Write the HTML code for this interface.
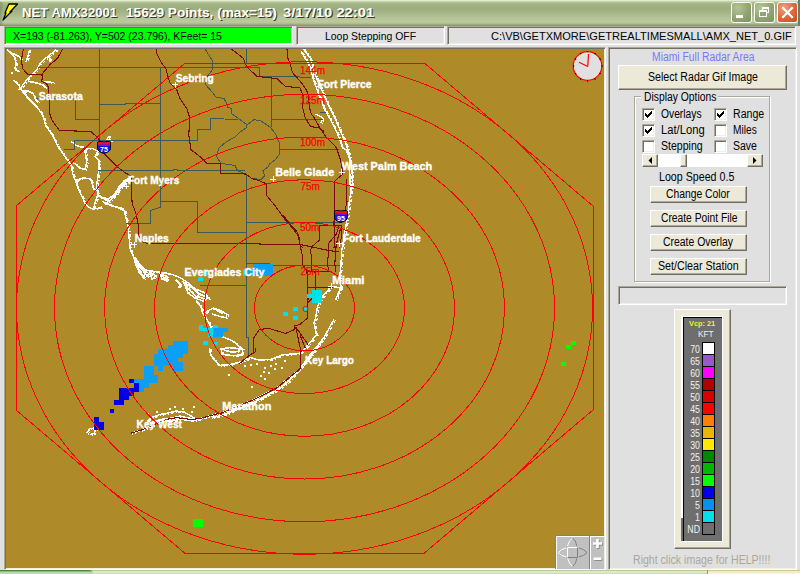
<!DOCTYPE html>
<html><head><meta charset="utf-8">
<style>
*{margin:0;padding:0;box-sizing:border-box}
html,body{width:800px;height:574px;overflow:hidden;background:#e0e0e0;font-family:"Liberation Sans",sans-serif;position:relative}
.abs{position:absolute}
#title{left:0;top:0;width:800px;height:26px;background:linear-gradient(to bottom,#e6eecf 0px,#dfe8c6 1px,#b4c396 2px,#a3b487 4px,#9cad7c 8px,#a6b689 13px,#b6c598 18px,#bcca9c 22px,#aab78c 24px,#8f9b73 25px,#8f9b73 26px)}
.tt{position:absolute;top:5px;font-weight:bold;font-size:13px;line-height:16px;color:#fff;text-shadow:1px 1px 0 #3a3a20;white-space:pre;transform-origin:0 0}
.tb{top:2px;width:21px;height:21px;border:1px solid #fff;border-radius:3px;background:radial-gradient(circle at 30% 25%,#b5c49a 0,#93a472 55%,#7f9160 100%)}
.s2{position:absolute;box-shadow:inset 1px 1px 0 #716f64, inset -1px -1px 0 #f1efe2;border-top:1px solid #aca899;border-left:1px solid #aca899;border-right:1px solid #fff;border-bottom:1px solid #fff}
.raised{position:absolute;background:#ece9d8;border-top:1px solid #fff;border-left:1px solid #fff;border-right:1px solid #716f64;border-bottom:1px solid #716f64;box-shadow:inset -1px -1px 0 #aca899}
.t{position:absolute;font-size:11px;line-height:11px;color:#000;white-space:pre;transform-origin:0 0}
.p{position:absolute;font-size:12px;line-height:12px;color:#000;white-space:pre;transform-origin:0 0}
.cb{position:absolute;width:13px;height:13px;background:#fff;border-top:1px solid #aca899;border-left:1px solid #aca899;border-right:1px solid #fff;border-bottom:1px solid #fff;box-shadow:inset 1px 1px 0 #716f64, inset -1px -1px 0 #f1efe2}
.lg{position:absolute;font-size:10px;line-height:10px;color:#f0f0f0;white-space:pre;text-align:right;width:30px;transform-origin:100% 0;transform:scaleX(0.88)}
.sw{position:absolute;left:702px;width:13px;height:13px;border:1px solid #000}
</style></head><body>
<div id="title" class="abs">
  <svg class="abs" style="left:0;top:0" width="22" height="24" viewBox="0 0 22 24">
    <polygon points="9,4 17.5,4 10,12 12,11 3,20 6,13 5,13 8,6" fill="#ffff00" stroke="#000" stroke-width="1.3" stroke-linejoin="round"/>
  </svg>
  <div class="tt" style="left:21.5px;transform:scaleX(1.01)">NET AMX32001</div>
  <div class="tt" style="left:125.5px;transform:scaleX(1.051)">15629 Points, (max=15)</div>
  <div class="tt" style="left:283px;transform:scaleX(1.136)">3/17/10 22:01</div>
  <div class="tb abs" style="left:731px"><div class="abs" style="left:4px;top:12px;width:7px;height:3px;background:#fff"></div></div>
  <div class="tb abs" style="left:754px">
    <div class="abs" style="left:7px;top:4px;width:7px;height:6px;border:1px solid #fff;border-top-width:2px"></div>
    <div class="abs" style="left:4px;top:7px;width:8px;height:7px;border:1px solid #fff;border-top-width:2px;background:#93a472"></div>
  </div>
  <div class="tb abs" style="left:777px;background:radial-gradient(circle at 30% 25%,#f0a080 0,#de6a40 50%,#c94a20 100%)">
    <svg class="abs" style="left:0;top:0" width="19" height="19"><path d="M5,5 L14,14 M14,5 L5,14" stroke="#fff" stroke-width="2.2" stroke-linecap="square"/></svg>
  </div>
  <div class="abs" style="left:798px;top:0;width:2px;height:26px;background:#6f7d58"></div>
  <div class="abs" style="left:0;top:2px;width:4px;height:24px;background:linear-gradient(to right,rgba(110,130,90,0.55),rgba(110,130,90,0))"></div>
</div>

<!-- status row -->
<div class="s2" style="left:4px;top:26px;width:289px;height:19px;background:#00ff00"></div>
<div class="t" style="left:13px;top:30.7px;transform:scaleX(0.954)">X=193 (-81.263), Y=502 (23.796), KFeet= 15</div>
<div class="s2" style="left:296px;top:26px;width:149px;height:19px;background:#e0e0e0"></div>
<div class="t" style="left:324.5px;top:30.7px;transform:scaleX(0.948)">Loop Stepping OFF</div>
<div class="s2" style="left:447px;top:26px;width:349px;height:19px;background:#e0e0e0"></div>
<div class="t" style="left:491px;top:30.7px;transform:scaleX(1.005)">C:\VB\GETXMORE\GETREALTIMESMALL\AMX_NET_0.GIF</div>

<!-- map -->
<div class="s2" style="left:4px;top:47px;width:602px;height:523px;background:#ae8b28;overflow:hidden">
<svg class="abs" style="left:-5px;top:-48px" width="800" height="600" viewBox="0 0 800 600">
<g fill="none" stroke="#ffffff" stroke-width="1.5" stroke-linejoin="round" shape-rendering="crispEdges"><path d="M7,49.7 L11.3,53.3 L15,58.2 L16.2,64.3 L15,68 L16.2,70.4 L18.6,70.4"/><path d="M12.5,53.3 L19.9,57 L21,59.4"/><path d="M29.6,49.7 L27.8,57 L26,61.9"/><path d="M56.4,49.7 L50.3,54.5 L44.2,59.4 L40.6,63 L37,69.2 L33.3,72.8 L28.4,77.7 L24.7,82.6 L21,87.5 L18.6,89.9"/><path d="M49,57 L50.3,61.9"/><path d="M13.8,80.1 L18.6,85 L22.3,91.1 L27.2,97.2 L32,102 L37,107 L40.6,111.9 L43,116 L46,126 L52.5,135 L59,148.9 L61.6,151.3 L67.1,159.7 L71.3,165.3 L72.7,173.6 L75.5,180.6 L78.3,189 L82.5,197.3 L85.3,204.3 L90.8,208.5 L97.8,208.5 L102,207"/><path d="M22.3,91.1 L28.4,91.1 L33.3,93.6 L35.7,99.7 L38.1,102.1"/><path d="M28.4,81.4 L35.7,82.6 L43,85 L45.5,87.5"/><path d="M44.2,81.4 L54,82.6"/><path d="M71.3,141.6 L76.9,145.8 L83.9,147.1 L85.3,152.7 L86.7,161.1 L85.3,169.4 L79.7,168 L75.5,163.9 L72.7,162.5"/><path d="M83.9,148.5 L92.2,148.5 L97.8,151.3 L95,156.9 L99.2,161.1 L99.2,168 L97.8,177.8 L96.4,186.2 L97.8,194.5 L95,202.9 L93.6,208.5"/><path d="M75.5,180.6 L83.9,177.8 L90.8,179.2 L93.6,189 L97.8,190.4"/><path d="M97.8,194.5 L106.2,200.1 L113.1,196 L118.7,187.6 L124.3,180.6 L131.3,177.8"/><path d="M102,201.5 L109,204.3 L116,207 L122.9,208.5 L125.7,214"/><path d="M106,141 L108.75,136.5 L110.5,141"/><path d="M128.7,180.2 L119,186.3 L116.6,193.3 L108.7,198.5 L100,197.6"/><path d="M124.4,182.8 L117.4,191.6 L110.5,200.3 L105.2,203.7 L117.4,207.2 L124.4,210.7 L126,217.7 L128,226.4 L128.7,233.4 L129.6,242 L130,248 L132.5,255 L138.75,263.75 L145,270 L152.5,271.25 L161.25,272.5 L170,273.75 L180,277.5 L187.5,282.5 L195,288.75 L203.4,292.2 L207,295.9 L208.3,298.3 L204,299 L197.3,295.9"/><path d="M136,262 L140,272 L144,279"/><path d="M141,268 L147,276 L150,273"/><path d="M161,273 L165,279 L167,276"/><path d="M183,281 L188,289 L192,286"/><path d="M190,290 L196,297 L200,294"/><path d="M196,300.7 L201,306.8 L202.2,311.7 L204.6,316.6 L208.3,321.5 L210.7,326.3 L213.2,331.2 L220.5,336.1 L230.2,339.75 L236.3,343.4 L241.2,348.3"/><path d="M204.6,313 L213.2,308 L220.5,310.5 L226.6,314.1 L226.6,317.8 L220.5,316.6 L212,314.1"/><path d="M209.6,348 L210.5,355 L219.2,365.4 L229.6,364.6 L240,362 L250.5,357.6 L259.2,360.2 L271.4,359.3 L281.9,355 L300,353.2 L305.2,348 L310.5,342 L316.5,335 L314,323 L315.7,317.7 L317.4,307.2 L320.9,298.5 L326,292.4 L331.4,286.3 L341,288 L337.5,295 L335.7,300.3"/><path d="M221,349 L230,347.5 L242.7,349 L242,355 L232,355.5 L222,354 Z"/><path d="M334,319.4 L324.4,336.8 L319.2,343.8 L315.7,348 L310,355 L300,368.9 L287,379.4 L276.7,388 L266.2,393.3 L252.3,400.3 L234.8,407.2 L221,413.3 L215.7,414.2 L200,418.6 L190.6,419.4 L176.7,417.7 L166.2,419.4 L154,424.7 L141.8,429.9 L130.5,433.4"/><path d="M86.5,433.5 L90,428.5 L96,428 L94,433.5 L90,434.5"/><path d="M303.5,48.9 L310.5,58.5 L315.7,75.9 L322.6,91.6 L328.7,105.5 L334.8,117.7 L340,130 L345.3,142 L348.8,153.2 L351.4,165.4 L352.3,174.1 L352.3,186.3 L349.7,198.5 L348,212.5 L346.2,224.7 L343.6,238.6 L342.7,248 L341.8,248.9 L341,265.4 L340,274 L341,288"/><path d="M300.9,51.5 L308.7,63.7 L314,81 L319,95 L324.4,109 L331.4,121.2 L337.5,133.4 L342.7,148 L346,149.7 L349.7,158.5 L349.7,172.4 L350.5,191.6"/><path d="M315.7,114 L322.6,117.7 L321,123"/><path d="M147,421 L153,417 L160,414.5 L168,413 L176,411 L184,412 L191,416 L196,419 L188,418 L180,416 L172,418 L163,419 L155,421"/><path d="M150,423 L160,420 L172,421 L182,419 L192,421 L200,419"/><path d="M324,337 L316,349 L306,361 L297,372 L289,381 L279,389 L268,395 L255,402 L240,408 L226,414 L212,418"/><path d="M134,258 L140,266 L146,272 L144,277 L139,272 L136,265 Z"/><path d="M150,272 L156,276 L152,279 Z"/><path d="M160,274 L166,276 L167,281 L162,279 Z"/><path d="M184,283 L192,287 L198,293 L206,297 L203,301 L195,298 L188,293 Z"/><path d="M176,280 L181,285 L178,287"/><path d="M224,350 L232,352 L240,351"/><path d="M216,310 L222,313"/></g>
<g fill="none" stroke="#ffffff" stroke-width="1.2" stroke-dasharray="3 2 1 2" transform="translate(1.5,0.8)" shape-rendering="crispEdges"><path d="M7,49.7 L11.3,53.3 L15,58.2 L16.2,64.3 L15,68 L16.2,70.4 L18.6,70.4"/><path d="M12.5,53.3 L19.9,57 L21,59.4"/><path d="M29.6,49.7 L27.8,57 L26,61.9"/><path d="M56.4,49.7 L50.3,54.5 L44.2,59.4 L40.6,63 L37,69.2 L33.3,72.8 L28.4,77.7 L24.7,82.6 L21,87.5 L18.6,89.9"/><path d="M49,57 L50.3,61.9"/><path d="M13.8,80.1 L18.6,85 L22.3,91.1 L27.2,97.2 L32,102 L37,107 L40.6,111.9 L43,116 L46,126 L52.5,135 L59,148.9 L61.6,151.3 L67.1,159.7 L71.3,165.3 L72.7,173.6 L75.5,180.6 L78.3,189 L82.5,197.3 L85.3,204.3 L90.8,208.5 L97.8,208.5 L102,207"/><path d="M22.3,91.1 L28.4,91.1 L33.3,93.6 L35.7,99.7 L38.1,102.1"/><path d="M28.4,81.4 L35.7,82.6 L43,85 L45.5,87.5"/><path d="M44.2,81.4 L54,82.6"/><path d="M71.3,141.6 L76.9,145.8 L83.9,147.1 L85.3,152.7 L86.7,161.1 L85.3,169.4 L79.7,168 L75.5,163.9 L72.7,162.5"/><path d="M83.9,148.5 L92.2,148.5 L97.8,151.3 L95,156.9 L99.2,161.1 L99.2,168 L97.8,177.8 L96.4,186.2 L97.8,194.5 L95,202.9 L93.6,208.5"/><path d="M75.5,180.6 L83.9,177.8 L90.8,179.2 L93.6,189 L97.8,190.4"/><path d="M97.8,194.5 L106.2,200.1 L113.1,196 L118.7,187.6 L124.3,180.6 L131.3,177.8"/><path d="M102,201.5 L109,204.3 L116,207 L122.9,208.5 L125.7,214"/><path d="M106,141 L108.75,136.5 L110.5,141"/><path d="M128.7,180.2 L119,186.3 L116.6,193.3 L108.7,198.5 L100,197.6"/><path d="M124.4,182.8 L117.4,191.6 L110.5,200.3 L105.2,203.7 L117.4,207.2 L124.4,210.7 L126,217.7 L128,226.4 L128.7,233.4 L129.6,242 L130,248 L132.5,255 L138.75,263.75 L145,270 L152.5,271.25 L161.25,272.5 L170,273.75 L180,277.5 L187.5,282.5 L195,288.75 L203.4,292.2 L207,295.9 L208.3,298.3 L204,299 L197.3,295.9"/><path d="M136,262 L140,272 L144,279"/><path d="M141,268 L147,276 L150,273"/><path d="M161,273 L165,279 L167,276"/><path d="M183,281 L188,289 L192,286"/><path d="M190,290 L196,297 L200,294"/><path d="M196,300.7 L201,306.8 L202.2,311.7 L204.6,316.6 L208.3,321.5 L210.7,326.3 L213.2,331.2 L220.5,336.1 L230.2,339.75 L236.3,343.4 L241.2,348.3"/><path d="M204.6,313 L213.2,308 L220.5,310.5 L226.6,314.1 L226.6,317.8 L220.5,316.6 L212,314.1"/><path d="M209.6,348 L210.5,355 L219.2,365.4 L229.6,364.6 L240,362 L250.5,357.6 L259.2,360.2 L271.4,359.3 L281.9,355 L300,353.2 L305.2,348 L310.5,342 L316.5,335 L314,323 L315.7,317.7 L317.4,307.2 L320.9,298.5 L326,292.4 L331.4,286.3 L341,288 L337.5,295 L335.7,300.3"/><path d="M221,349 L230,347.5 L242.7,349 L242,355 L232,355.5 L222,354 Z"/><path d="M334,319.4 L324.4,336.8 L319.2,343.8 L315.7,348 L310,355 L300,368.9 L287,379.4 L276.7,388 L266.2,393.3 L252.3,400.3 L234.8,407.2 L221,413.3 L215.7,414.2 L200,418.6 L190.6,419.4 L176.7,417.7 L166.2,419.4 L154,424.7 L141.8,429.9 L130.5,433.4"/><path d="M86.5,433.5 L90,428.5 L96,428 L94,433.5 L90,434.5"/><path d="M303.5,48.9 L310.5,58.5 L315.7,75.9 L322.6,91.6 L328.7,105.5 L334.8,117.7 L340,130 L345.3,142 L348.8,153.2 L351.4,165.4 L352.3,174.1 L352.3,186.3 L349.7,198.5 L348,212.5 L346.2,224.7 L343.6,238.6 L342.7,248 L341.8,248.9 L341,265.4 L340,274 L341,288"/><path d="M300.9,51.5 L308.7,63.7 L314,81 L319,95 L324.4,109 L331.4,121.2 L337.5,133.4 L342.7,148 L346,149.7 L349.7,158.5 L349.7,172.4 L350.5,191.6"/><path d="M315.7,114 L322.6,117.7 L321,123"/><path d="M147,421 L153,417 L160,414.5 L168,413 L176,411 L184,412 L191,416 L196,419 L188,418 L180,416 L172,418 L163,419 L155,421"/><path d="M150,423 L160,420 L172,421 L182,419 L192,421 L200,419"/><path d="M324,337 L316,349 L306,361 L297,372 L289,381 L279,389 L268,395 L255,402 L240,408 L226,414 L212,418"/><path d="M134,258 L140,266 L146,272 L144,277 L139,272 L136,265 Z"/><path d="M150,272 L156,276 L152,279 Z"/><path d="M160,274 L166,276 L167,281 L162,279 Z"/><path d="M184,283 L192,287 L198,293 L206,297 L203,301 L195,298 L188,293 Z"/><path d="M176,280 L181,285 L178,287"/><path d="M224,350 L232,352 L240,351"/><path d="M216,310 L222,313"/></g>
<g fill="#ffffff" shape-rendering="crispEdges"><rect x="227.7" y="374" width="2" height="2"/><rect x="251.25" y="386.1" width="2" height="2"/><rect x="244" y="365" width="2" height="2"/><rect x="250.4" y="364.2" width="2" height="2"/><rect x="256" y="363.4" width="2" height="2"/><rect x="264.25" y="367.4" width="2" height="2"/><rect x="263.4" y="370.7" width="2" height="2"/><rect x="268.3" y="372.3" width="2" height="2"/><rect x="260.2" y="374.75" width="2" height="2"/><rect x="264.25" y="378" width="2" height="2"/><rect x="269.9" y="365" width="2" height="2"/><rect x="274" y="368.25" width="2" height="2"/><rect x="281.3" y="366.6" width="2" height="2"/><rect x="274.8" y="363.4" width="2" height="2"/><rect x="283.75" y="360.1" width="2" height="2"/><rect x="262.6" y="358.5" width="2" height="2"/><rect x="11" y="72" width="2" height="2"/><rect x="156" y="411" width="2" height="2"/><rect x="169" y="408" width="2" height="2"/><rect x="174" y="406" width="2" height="2"/><rect x="193" y="406" width="2" height="2"/><rect x="191" y="411" width="2" height="2"/><rect x="147" y="413" width="2" height="2"/><rect x="182" y="408" width="2" height="2"/></g>
<g fill="none" stroke="#3b5a5c" stroke-width="1" shape-rendering="crispEdges"><path d="M38,67.5 H259.5 V76.5 L300,77 L311,77.5"/><path d="M99.5,49 V141"/><path d="M36,98.5 H75.5 V119.5 H99.5"/><path d="M99.5,104.5 H125.5 V103.5 H160.5"/><path d="M160.5,67 V207 L150.5,210.5 V223.5 H126"/><path d="M64,149.5 H74.5 V140.5 H197.5 V129.5 H210.5 V118.5 L238,119.5"/><path d="M205,49 L212,60 L213,69 L205,79 L206,85 L212,92 L216,97 L224,98.5 L227,104 L228,107.5 L231.5,108.5 L232,114 L238,118 L247,125 L246,128 L240,132 L235,137 L226,142 L219,148 L216.5,156.5 L221,163.5 L235,165.5 L237.5,170.5 L245,174 L252,178.5 L261,179.5 L264.5,176 L263,170.5 L268,167 L270,163.5 L275,160 L279,155 L280,149 L279,142 L275,133 L270,127 L261,121 L254,119.5 L247,125"/><path d="M246.5,49 V64"/><path d="M271.5,77 V127"/><path d="M271.5,119.5 H322.5"/><path d="M320,112.5 H326"/><path d="M280,149.5 H339"/><path d="M97.5,170.5 H173.5 V169 H177.5 V170.5 H245"/><path d="M246.5,174 V337 H248.5 V357"/><path d="M246,222.5 H340"/><path d="M161,201.5 H197.5 V232.5 H246"/><path d="M200,285.5 H246.5"/><path d="M246.5,263.5 H269.5 L271.5,265.5 H340"/></g>
<g fill="none" stroke="#7c0808" stroke-width="1.1" shape-rendering="crispEdges"><path d="M23.5,49 L22.3,53.3 L21.7,60.6 L22.3,68 L26,72.8 L28.4,74.7 L40.6,74.7 L42.4,75.3 L41.8,81.4 L46.7,83.8 L48.5,87.5 L49.1,97.2 L50,114.75 L52,120 L59.25,130.5 L90.75,131.5 L97.5,137.25 L100,141"/><path d="M62.5,49 L57.7,58.2 L50.3,64.3 L43,72.8 L42.4,75.3"/><path d="M104.5,154 L111.7,161.1 L117.3,166.7 L124.3,172.2 L131.3,176.4 L131.3,191.7 L132.2,203.7 L135.7,212.5 L138.3,224.7 L139.2,240.3 L147,243.5 H254 L266,244.5 H300 L302.6,248"/><path d="M156,49 L156.5,53 L161,62 L166,69 L169.7,82.8 L176.7,89.8 L180,98.5 L187,109 L189.7,117.7 L188.8,135 L190.9,149.6 L201,157.5 L207,163.5 L220,163.5 L221,173.3 L245.3,174 L252,178.5 L260,181 L266,183.7 L267,196 L275,205.5 L283.6,217.7 L294,229.9 L300,238.6"/><path d="M231.4,49 L243.6,58.5 L245.3,63.7 L248.8,69 L256.6,76 L264.5,77.3 L276.7,78.5 L285.4,86.3 L300,88 L303.5,96.8 L302.6,107.2 L305.2,117.7 L310.5,126.4 L319,128 L324.4,131.6"/><path d="M287,49 L288,58.5 L290.6,65.4 L292.3,72.4 L300,81 L305.2,88 L307.8,93.3 L308.7,100.3 L310.5,112.5 L314,117.7 L319,126.4 L326,136.9 L333,143.8 L336.6,148 L340,158.5 L341.8,165.4 L342.7,174.1 L334.8,181 L334,224.7 L334.8,235 L334,248"/><path d="M346.2,179.4 L347,202 L344.4,212.5"/><path d="M341,224.7 L341.8,235 L339.2,248"/><path d="M307,270.5 L307.8,317.7 L301.7,323 L300,324.7 L295,325.5 L294,329.9 L285.4,333.4 L276.7,330.8 L268,328 L259.2,329.9 L253.1,338.6 V351.5"/><path d="M317.4,293.3 L312.2,298.5 L307,303.7"/><path d="M300,335 L305.2,348"/><path d="M255.7,348 V351.5 L248.8,355.8 L239.2,363.7"/><path d="M300,368.9 L287,379.4 L276.7,388 L266.2,393.3 L252.3,400.3 L234.8,407.2 L221,413.3 L215.7,414.2 L200,418.6 L190.6,419.4 L176.7,417.7 L166.2,419.4 L154,424.7 L141.8,429.9 L130.5,433.4"/><path d="M295.7,327 L308,344.5"/><path d="M295.7,327 L301,351.4 L300,368.9"/><path d="M283,215 L288.9,222.4 L297.8,232.8 L300,244.6 L302.2,255 L303,265.3 L307.4,271.2 L308.1,300"/><path d="M280,244.6 H300.7 L328.8,250.5 L339.2,252"/><path d="M320,225.4 L319.2,240.2 L311.8,246.8 L310.3,250.5 L311.8,258 V271.2 L315.5,272.7 V286 L314,300"/><path d="M320,225.4 H339.2"/><path d="M334.8,215 V225.4"/><path d="M339.2,225.4 L336.2,234.2 L328.8,243.1 V250.5 L327.4,263.8 L328.8,271.2 H308"/><path d="M340.7,228.3 L338.5,235.7 L336.2,244.6 L334.8,263.8 L336,272"/><path d="M308,287.5 H333.3"/></g>
<g transform="translate(97,141)"><path d="M0.5,1 L3,0.5 L7,1 L11,0.5 L13.5,1 V7.5 Q13.5,10.5 7,12.5 Q0.5,10.5 0.5,7.5 Z" fill="#1414f0" stroke="#000" stroke-width="1"/><path d="M1,1.2 L3,1 L7,1.5 L11,1 L13,1.2 V3.6 H1 Z" fill="#ff1010"/><rect x="1" y="3.6" width="12" height="1" fill="#a020c0"/><text x="7" y="10.6" text-anchor="middle" font-family="Liberation Sans" font-weight="bold" font-size="7" fill="#fff">75</text></g><g transform="translate(334,210)"><path d="M0.5,1 L3,0.5 L7,1 L11,0.5 L13.5,1 V7.5 Q13.5,10.5 7,12.5 Q0.5,10.5 0.5,7.5 Z" fill="#1414f0" stroke="#000" stroke-width="1"/><path d="M1,1.2 L3,1 L7,1.5 L11,1 L13,1.2 V3.6 H1 Z" fill="#ff1010"/><rect x="1" y="3.6" width="12" height="1" fill="#a020c0"/><text x="7" y="10.6" text-anchor="middle" font-family="Liberation Sans" font-weight="bold" font-size="7" fill="#fff">95</text></g>
<g shape-rendering="crispEdges"><rect x="253" y="263.75" width="20" height="12.5" fill="#0ca0f4"/><rect x="247.5" y="268.75" width="5.5" height="7.5" fill="#0ca0f4"/><rect x="242.5" y="268.75" width="5" height="7.5" fill="#00e0e8"/><rect x="203" y="269" width="5" height="7.3" fill="#00e0e8"/><rect x="198" y="277" width="5" height="3.6" fill="#00e0e8"/><rect x="198.5" y="324.5" width="4.3" height="6.7" fill="#00e0e8"/><rect x="202.8" y="328.2" width="3.7" height="3" fill="#00e0e8"/><rect x="213.2" y="324.5" width="4.8" height="3.7" fill="#00e0e8"/><rect x="213.2" y="328.2" width="14.6" height="3.6" fill="#0ca0f4"/><rect x="213.2" y="331.8" width="9.8" height="4.9" fill="#0ca0f4"/><rect x="207.7" y="328.2" width="4.9" height="8.5" fill="#00e0e8"/><rect x="202.8" y="341" width="4.9" height="3.6" fill="#00e0e8"/><rect x="213.2" y="341.6" width="4.8" height="3" fill="#00e0e8"/><rect x="283" y="311.5" width="5" height="4" fill="#00e0e8"/><rect x="293" y="307" width="5" height="4" fill="#00e0e8"/><rect x="293" y="316" width="5" height="4" fill="#00e0e8"/><rect x="312" y="290" width="10" height="13" fill="#00e0e8"/><rect x="307" y="294" width="5" height="3.5" fill="#00e0e8"/><rect x="173" y="341" width="15" height="7" fill="#0ca0f4"/><rect x="168" y="344.7" width="5" height="3.3" fill="#0ca0f4"/><rect x="193" y="519" width="10" height="8" fill="#00ff00"/><rect x="571" y="341" width="5" height="4" fill="#00ff00"/><rect x="566" y="345" width="5" height="4" fill="#00ff00"/><rect x="561" y="362" width="5" height="4" fill="#00ff00"/><rect x="129" y="379" width="5" height="3.6" fill="#0000e8"/><rect x="134" y="382.8" width="5.3" height="9.5" fill="#0000e8"/><rect x="118.8" y="388" width="15.3" height="8" fill="#0000e8"/><rect x="118.8" y="396" width="10.2" height="4.4" fill="#0000e8"/><rect x="114" y="400.4" width="9.8" height="4.4" fill="#0000e8"/><rect x="110" y="409" width="4" height="3.8" fill="#0000e8"/><rect x="94" y="417" width="4.6" height="5" fill="#0000e8"/><rect x="94" y="422" width="9.8" height="8" fill="#0000e8"/><rect x="100" y="422" width="3.8" height="8" fill="#0000e8"/><polygon points="172.9,341.1 187.6,341.1 187.6,353.6 183.2,353.6 183.2,358 178,358 178,362.3 183.2,362.3 183.2,371.1 172.9,371.1 172.9,366 162.7,366 162.7,371.1 158.3,371.1 158.3,366 153.9,366 153.9,353.6 158.3,353.6 158.3,349.2 167.8,349.2 167.8,344.8 172.9,344.8" fill="#0ca0f4"/><polygon points="144.4,366 153.9,366 153.9,374.8 158.3,374.8 158.3,382.8 148.8,382.8 148.8,388 143.7,388 143.7,392.3 139.3,392.3 139.3,382.8 134.1,382.8 134.1,379.2 144.4,379.2" fill="#0ca0f4"/></g>
<g fill="none" stroke="#ff0000" stroke-width="1" shape-rendering="crispEdges"><ellipse cx="304.5" cy="308" rx="50" ry="42.75"/><ellipse cx="304.5" cy="308" rx="100" ry="85.50"/><ellipse cx="304.5" cy="308" rx="150" ry="128.25"/><ellipse cx="304.5" cy="308" rx="200" ry="171.00"/><ellipse cx="304.5" cy="308" rx="250" ry="213.75"/><ellipse cx="304.5" cy="308" rx="288" ry="246.24"/><polygon points="185.2,63 424.3,63 593,206 593,410 423.8,553.5 185.2,553.5 16,410 16,206"/></g>
<g fill="#ff0000" stroke="#ff0000" stroke-width="0.25" font-family="Liberation Sans" font-size="10"><text x="300" y="73.8">144m</text><text x="300" y="103.5">125m</text><text x="300" y="146">100m</text><text x="300.4" y="189.6">75m</text><text x="300" y="231.4">50m</text><text x="300.4" y="274.5">25m</text></g>
<g fill="#ffffff" stroke="#ffffff" stroke-width="0.35" font-family="Liberation Sans" font-weight="bold" font-size="10.5"><text x="38.7" y="100.2" textLength="44" lengthAdjust="spacingAndGlyphs">Sarasota</text><text x="175.8" y="81.5" textLength="38" lengthAdjust="spacingAndGlyphs">Sebring</text><text x="317.4" y="88.2" textLength="54" lengthAdjust="spacingAndGlyphs">Fort Pierce</text><text x="127.9" y="184.2" textLength="51.4" lengthAdjust="spacingAndGlyphs">Fort Myers</text><text x="275.2" y="176.3" textLength="59" lengthAdjust="spacingAndGlyphs">Belle Glade</text><text x="341.8" y="170.3" textLength="90.4" lengthAdjust="spacingAndGlyphs">West Palm Beach</text><text x="134.8" y="242.1" textLength="34" lengthAdjust="spacingAndGlyphs">Naples</text><text x="342.7" y="241.7" textLength="78.2" lengthAdjust="spacingAndGlyphs">Fort Lauderdale</text><text x="184.5" y="275.5" textLength="80" lengthAdjust="spacingAndGlyphs">Everglades City</text><text x="332.2" y="284.2" textLength="32.3" lengthAdjust="spacingAndGlyphs">Miami</text><text x="305" y="363.8" textLength="49" lengthAdjust="spacingAndGlyphs">Key Largo</text><text x="222.3" y="410.3" textLength="49" lengthAdjust="spacingAndGlyphs">Marathon</text><text x="136.6" y="428.3" textLength="45.3" lengthAdjust="spacingAndGlyphs">Key West</text></g>
<g stroke="#ffffff" stroke-width="1" shape-rendering="crispEdges"><path d="M172,84.6H178M175,81.6V87.6"/><path d="M123,186.3H129M126,183.3V189.3"/><path d="M131,244.7H137M134,241.7V247.7"/><path d="M270.4,179.1H276.4M273.4,176.1V182.1"/><path d="M338.8,172.4H344.8M341.8,169.4V175.4"/><path d="M336.2,243.8H342.2M339.2,240.8V246.8"/><path d="M328,286H334M331,283V289"/></g>
<circle cx="305.5" cy="309" r="2.5" fill="#00e0e8" stroke="#ff0000" stroke-width="1"/>
</svg>
</div>
<!-- clock -->
<svg class="abs" style="left:570px;top:49px" width="36" height="36" viewBox="570 49 36 36">
  <circle cx="587.5" cy="66" r="14.3" fill="#e0e0e0" stroke="#ff0000" stroke-width="1.2"/>
  <g fill="#000">
    <rect x="587" y="51" width="1.2" height="1.2"/><rect x="587" y="80.5" width="1.2" height="1.2"/>
    <rect x="573" y="65.5" width="1.2" height="1.2"/><rect x="601.5" y="65.5" width="1.2" height="1.2"/>
    <rect x="594.5" y="53" width="1.2" height="1.2"/><rect x="580" y="53" width="1.2" height="1.2"/>
    <rect x="594.5" y="78.5" width="1.2" height="1.2"/><rect x="580" y="78.5" width="1.2" height="1.2"/>
    <rect x="575" y="58.5" width="1.2" height="1.2"/><rect x="599.5" y="58.5" width="1.2" height="1.2"/>
    <rect x="575" y="73" width="1.2" height="1.2"/><rect x="599.5" y="73" width="1.2" height="1.2"/>
  </g>
  <path d="M587.8,66.5 L588.5,54 M587.8,66.5 L579,62.3" stroke="#ff0000" stroke-width="1.2" fill="none"/>
</svg>
<!-- pan control -->
<svg class="abs" style="left:555px;top:535px" width="50" height="34" viewBox="555 535 50 34">
  <rect x="555" y="535" width="49" height="34" fill="#c0c0c0"/>
  <path d="M555.5,569 V535.5 H604" stroke="#808080" fill="none"/>
  <path d="M556.5,569 V536.5 H604" stroke="#ffffff" fill="none"/>
  <path d="M589.5,536 V569" stroke="#808080"/><path d="M590.5,537 V569" stroke="#fff"/>
  <rect x="567.5" y="547.5" width="10" height="10" fill="none" stroke="#808080"/>
  <path d="M567.5,557.5 V547.5 H577.5" stroke="#fff" fill="none"/>
  <path d="M567.5,546 Q569,540 572.6,538 M558.3,552.6 Q561,549 566,548 M566,556.8 Q561,556 558.3,552.6 M572.6,566.6 Q569,564 567.7,558.6" stroke="#fff" fill="none"/>
  <path d="M572.6,538 Q576,540 576.8,546 M579,548 Q584,549 587,552.6 M587,552.6 Q584,556 579,556.8 M576.8,558.6 Q576,564 572.6,566.6" stroke="#808080" fill="none"/>
  <path d="M593,543.5 H602 M597.5,539 V548" stroke="#808080" stroke-width="2.6" transform="translate(0.8,0.8)"/>
  <path d="M593,543.5 H602 M597.5,539 V548" stroke="#fff" stroke-width="2.6"/>
  <rect x="593.5" y="557.5" width="8" height="2.5" fill="#808080" transform="translate(0.8,0.8)"/>
  <rect x="593.5" y="557.5" width="8" height="2.5" fill="#fff"/>
</svg>

<!-- right panel -->
<div class="s2" style="left:608px;top:47px;width:189px;height:523px;background:#e0e0e0"></div>
<div class="p" style="left:651.7px;top:50.54px;color:#7878ff;transform:scaleX(0.8635)">Miami Full Radar Area</div>
<div class="raised" style="left:618px;top:65px;width:169px;height:25px"></div>
<div class="p" style="left:647.5px;top:70.74px;transform:scaleX(0.8818)">Select Radar Gif Image</div>
<!-- frame -->
<div class="abs" style="left:634px;top:96px;width:136px;height:186px;border:1px solid #aca899;box-shadow:inset 1px 1px 0 #fff, 1px 1px 0 #fff"></div>
<div class="abs" style="left:641px;top:90px;width:77px;height:12px;background:#e0e0e0"></div>
<div class="p" style="left:643.9px;top:90.74px;transform:scaleX(0.8617)">Display Options</div>
<div class="cb" style="left:642px;top:108px"></div>
<div class="cb" style="left:642px;top:124px"></div>
<div class="cb" style="left:642px;top:140px"></div>
<div class="cb" style="left:714px;top:108px"></div>
<div class="cb" style="left:714px;top:124px"></div>
<div class="cb" style="left:714px;top:140px"></div>
<svg class="abs" style="left:0;top:0" width="800" height="200"><g fill="#000" shape-rendering="crispEdges"><rect x="651" y="111" width="1" height="1"/><rect x="650" y="112" width="1" height="1"/><rect x="651" y="112" width="1" height="1"/><rect x="645" y="113" width="1" height="1"/><rect x="649" y="113" width="1" height="1"/><rect x="650" y="113" width="1" height="1"/><rect x="651" y="113" width="1" height="1"/><rect x="645" y="114" width="1" height="1"/><rect x="646" y="114" width="1" height="1"/><rect x="648" y="114" width="1" height="1"/><rect x="649" y="114" width="1" height="1"/><rect x="650" y="114" width="1" height="1"/><rect x="645" y="115" width="1" height="1"/><rect x="646" y="115" width="1" height="1"/><rect x="647" y="115" width="1" height="1"/><rect x="648" y="115" width="1" height="1"/><rect x="649" y="115" width="1" height="1"/><rect x="646" y="116" width="1" height="1"/><rect x="647" y="116" width="1" height="1"/><rect x="648" y="116" width="1" height="1"/><rect x="647" y="117" width="1" height="1"/><rect x="651" y="127" width="1" height="1"/><rect x="650" y="128" width="1" height="1"/><rect x="651" y="128" width="1" height="1"/><rect x="645" y="129" width="1" height="1"/><rect x="649" y="129" width="1" height="1"/><rect x="650" y="129" width="1" height="1"/><rect x="651" y="129" width="1" height="1"/><rect x="645" y="130" width="1" height="1"/><rect x="646" y="130" width="1" height="1"/><rect x="648" y="130" width="1" height="1"/><rect x="649" y="130" width="1" height="1"/><rect x="650" y="130" width="1" height="1"/><rect x="645" y="131" width="1" height="1"/><rect x="646" y="131" width="1" height="1"/><rect x="647" y="131" width="1" height="1"/><rect x="648" y="131" width="1" height="1"/><rect x="649" y="131" width="1" height="1"/><rect x="646" y="132" width="1" height="1"/><rect x="647" y="132" width="1" height="1"/><rect x="648" y="132" width="1" height="1"/><rect x="647" y="133" width="1" height="1"/><rect x="723" y="111" width="1" height="1"/><rect x="722" y="112" width="1" height="1"/><rect x="723" y="112" width="1" height="1"/><rect x="717" y="113" width="1" height="1"/><rect x="721" y="113" width="1" height="1"/><rect x="722" y="113" width="1" height="1"/><rect x="723" y="113" width="1" height="1"/><rect x="717" y="114" width="1" height="1"/><rect x="718" y="114" width="1" height="1"/><rect x="720" y="114" width="1" height="1"/><rect x="721" y="114" width="1" height="1"/><rect x="722" y="114" width="1" height="1"/><rect x="717" y="115" width="1" height="1"/><rect x="718" y="115" width="1" height="1"/><rect x="719" y="115" width="1" height="1"/><rect x="720" y="115" width="1" height="1"/><rect x="721" y="115" width="1" height="1"/><rect x="718" y="116" width="1" height="1"/><rect x="719" y="116" width="1" height="1"/><rect x="720" y="116" width="1" height="1"/><rect x="719" y="117" width="1" height="1"/></g></svg>
<div class="p" style="left:660.5px;top:107.84px;transform:scaleX(0.8571)">Overlays</div>
<div class="p" style="left:660.5px;top:123.84px;transform:scaleX(0.9350)">Lat/Long</div>
<div class="p" style="left:660.5px;top:139.84px;transform:scaleX(0.8800)">Stepping</div>
<div class="p" style="left:732.6px;top:107.84px;transform:scaleX(0.8828)">Range</div>
<div class="p" style="left:732.6px;top:123.84px;transform:scaleX(0.8488)">Miles</div>
<div class="p" style="left:732.6px;top:139.84px;transform:scaleX(0.8763)">Save</div>
<!-- scrollbar -->
<div class="abs" style="left:642px;top:154px;width:121px;height:13px;background:#fff"></div>
<div class="raised" style="left:642px;top:154px;width:16px;height:13px"></div>
<div class="raised" style="left:680px;top:154px;width:7px;height:13px"></div>
<div class="raised" style="left:747px;top:154px;width:16px;height:13px"></div>
<svg class="abs" style="left:0;top:0" width="800" height="200">
  <polygon points="652,157 652,164 648.5,160.5" fill="#000"/>
  <polygon points="753,157 753,164 756.5,160.5" fill="#000"/>
</svg>
<div class="p" style="left:658.75px;top:170.64px;transform:scaleX(0.8892)">Loop Speed 0.5</div>
<div class="raised" style="left:650px;top:186px;width:97px;height:17px"></div>
<div class="raised" style="left:650px;top:210px;width:97px;height:17px"></div>
<div class="raised" style="left:650px;top:234px;width:97px;height:17px"></div>
<div class="raised" style="left:650px;top:258px;width:97px;height:17px"></div>
<div class="p" style="left:666.25px;top:188.04px;transform:scaleX(0.8617)">Change Color</div>
<div class="p" style="left:660.5px;top:212.04px;transform:scaleX(0.8562)">Create Point File</div>
<div class="p" style="left:663.25px;top:236.04px;transform:scaleX(0.8672)">Create Overlay</div>
<div class="p" style="left:658.25px;top:260.04px;transform:scaleX(0.8892)">Set/Clear Station</div>
<div class="s2" style="left:618px;top:286px;width:169px;height:19px;background:#e0e0e0"></div>
<!-- legend -->
<div class="raised" style="left:674px;top:309px;width:57px;height:240px"></div>
<div class="abs" style="left:681px;top:316px;width:42px;height:226px;background:#fff"></div>
<div class="abs" style="left:683px;top:317px;width:39px;height:224px;background:#6e6e6e;border-left:1px solid #000;border-top:1px solid #000"></div>
<div class="abs" style="left:681px;top:518px;width:2px;height:23px;background:#6e6e6e"></div>
<div class="abs" style="left:689px;top:319.5px;font-size:8px;line-height:8px;font-weight:bold;color:#f0f030;white-space:pre;transform-origin:0 0;transform:scaleX(0.92)">Vcp: 21</div>
<div class="abs" style="left:697.5px;top:329.5px;font-size:9px;line-height:9px;color:#f0f0f0;transform-origin:0 0;transform:scaleX(0.92)">KFT</div><div class="sw" style="top:342px;background:#ffffff"></div><div class="lg" style="left:670px;top:344.5px">70</div><div class="sw" style="top:354px;background:#9858c8"></div><div class="lg" style="left:670px;top:356.5px">65</div><div class="sw" style="top:366px;background:#ff00ff"></div><div class="lg" style="left:670px;top:368.5px">60</div><div class="sw" style="top:378px;background:#b00000"></div><div class="lg" style="left:670px;top:380.5px">55</div><div class="sw" style="top:390px;background:#d80000"></div><div class="lg" style="left:670px;top:392.5px">50</div><div class="sw" style="top:402px;background:#ff0000"></div><div class="lg" style="left:670px;top:404.5px">45</div><div class="sw" style="top:414px;background:#ff8000"></div><div class="lg" style="left:670px;top:416.5px">40</div><div class="sw" style="top:426px;background:#e8b800"></div><div class="lg" style="left:670px;top:428.5px">35</div><div class="sw" style="top:438px;background:#ffe800"></div><div class="lg" style="left:670px;top:440.5px">30</div><div class="sw" style="top:450px;background:#008800"></div><div class="lg" style="left:670px;top:452.5px">25</div><div class="sw" style="top:462px;background:#00b800"></div><div class="lg" style="left:670px;top:464.5px">20</div><div class="sw" style="top:474px;background:#00ff00"></div><div class="lg" style="left:670px;top:476.5px">15</div><div class="sw" style="top:486px;background:#0000e8"></div><div class="lg" style="left:670px;top:488.5px">10</div><div class="sw" style="top:498px;background:#0890f0"></div><div class="lg" style="left:670px;top:500.5px">5</div><div class="sw" style="top:510px;background:#00e0e8"></div><div class="lg" style="left:670px;top:512.5px">1</div><div class="sw" style="top:522px;background:#6e6e6e"></div><div class="lg" style="left:670px;top:524.5px">ND</div>
<div class="p" style="left:633px;top:553.84px;color:#aca899;transform:scaleX(0.8800)">Right click image for HELP!!!!</div>

<!-- taskbar top -->
<div class="abs" style="left:0;top:570px;width:800px;height:4px;background:linear-gradient(#9fb07e,#d8e4b8 1px,#e8f0cc 2px,#c8d4a4)"></div>
<div class="abs" style="left:0;top:570px;width:93px;height:4px;border-top-right-radius:6px;background:linear-gradient(#3c7a2c,#5a9a48 1px,#b8dca8 2px,#c0d8a8)"></div>
<div class="abs" style="left:707px;top:570px;width:93px;height:4px;border-left:1px solid #a89858;background:linear-gradient(#b8a870,#efe6bc 1px,#faf2cc 3px)"></div>
</body></html>
